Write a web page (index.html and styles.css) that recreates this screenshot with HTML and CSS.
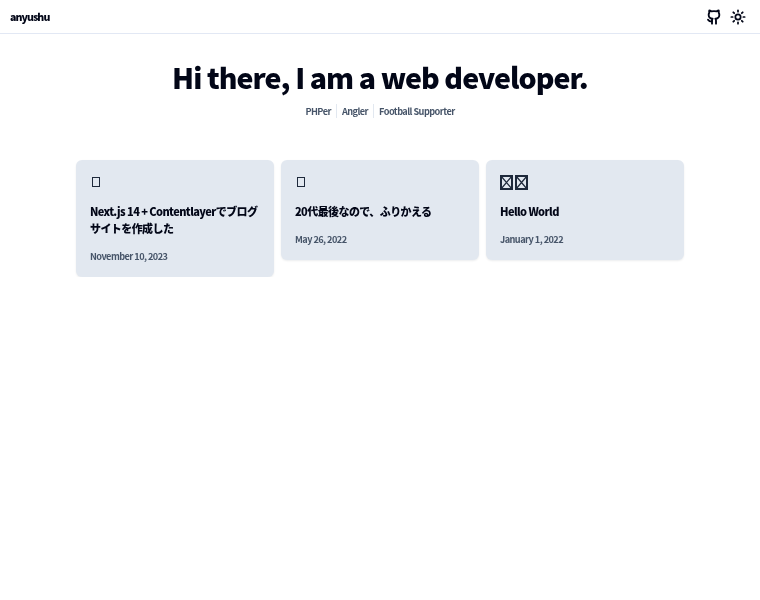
FILE: index.html
```html
<!DOCTYPE html>
<html lang="ja">
<head>
<meta charset="utf-8">
<title>anyushu</title>
<link rel="stylesheet" href="styles.css">
</head>
<body>
<header class="header">
  <a class="logo" href="#">anyushu</a>
  <div class="actions">
    <svg class="icon" viewBox="0 0 24 24" fill="none" stroke="currentColor" stroke-width="2.8" stroke-linecap="round" stroke-linejoin="round"><path d="M15 22v-4a4.8 4.8 0 0 0-1-3.5c3 0 6-2 6-5.5.08-1.25-.27-2.48-1-3.5.28-1.15.28-2.35 0-3.5 0 0-1 0-3 1.5-2.64-.5-5.36-.5-8 0C6 2 5 2 5 2c-.3 1.15-.3 2.35 0 3.5A5.4 5.4 0 0 0 4 9c0 3.5 3 5.5 6 5.5-.39.49-.68 1.05-.85 1.65-.17.6-.22 1.23-.15 1.85v4"/><path d="M9 18c-4.51 2-5-2-6-2"/></svg>
    <svg class="icon" viewBox="0 0 24 24" fill="none" stroke="currentColor" stroke-width="2.6" stroke-linecap="round" stroke-linejoin="round"><circle cx="12" cy="12" r="4"/><path d="M12 2v2M12 20v2M4.93 4.93l1.41 1.41M17.66 17.66l1.41 1.41M2 12h2M20 12h2M6.34 17.66l-1.41 1.41M19.07 4.93l-1.41 1.41"/></svg>
  </div>
</header>
<main class="main">
  <h1 class="title">Hi there, I am a web developer.</h1>
  <ul class="tags">
    <li class="tag">PHPer</li>
    <li class="tag">Angler</li>
    <li class="tag">Football Supporter</li>
  </ul>
  <div class="cards">
    <article class="card">
      <div class="emoji"><span class="tofu"></span></div>
      <h2 class="card-title">Next.js 14 + Contentlayerでブログサイトを作成した</h2>
      <time class="date">November 10, 2023</time>
    </article>
    <article class="card">
      <div class="emoji"><span class="tofu"></span></div>
      <h2 class="card-title">20代最後なので、ふりかえる</h2>
      <time class="date">May 26, 2022</time>
    </article>
    <article class="card">
      <div class="emoji">
        <svg class="xbox" viewBox="0 0 13 15" fill="none" stroke="currentColor"><path stroke-width="2" d="M1 1h11v13H1z"/><path stroke-width="1.2" d="M1 1l11 13M12 1L1 14"/></svg>
        <svg class="xbox" viewBox="0 0 13 15" fill="none" stroke="currentColor"><path stroke-width="2" d="M1 1h11v13H1z"/><path stroke-width="1.2" d="M1 1l11 13M12 1L1 14"/></svg>
      </div>
      <h2 class="card-title">Hello World</h2>
      <time class="date">January 1, 2022</time>
    </article>
  </div>
</main>
</body>
</html>
```
FILE: styles.css
```css
* { box-sizing: border-box; }
body {
  margin: 0;
  background: #fff;
  color: #0f172a;
  font-family: "Noto Sans CJK JP", "Noto Sans", sans-serif;
  filter: blur(0.3px);
}
.header {
  height: 34px;
  display: flex;
  align-items: center;
  justify-content: space-between;
  padding: 0 14px 0 10px;
  border-bottom: 1px solid #e2e8f4;
}
.logo {
  font-size: 10.6px;
  font-weight: 900;
  letter-spacing: -0.95px;
  color: #020617;
  text-decoration: none;
}
.actions { display: flex; gap: 8px; }
.icon { width: 16px; height: 16px; color: #020617; display: block; }
.main {
  width: 608px;
  margin: 0 auto;
  padding-top: 20px;
}
.title {
  margin: 0;
  text-align: center;
  font-size: 28.5px;
  line-height: 46px;
  font-weight: 900;
  letter-spacing: -0.95px;
  color: #020617;
  white-space: nowrap;
}
.tags {
  list-style: none;
  margin: 4px 0 0;
  padding: 0;
  display: flex;
  justify-content: center;
  font-size: 9.2px;
  line-height: 14px;
  font-weight: 700;
  letter-spacing: -0.56px;
  color: #475569;
}
.tag { padding: 0 5px; }
.tag + .tag { border-left: 1px solid #e2e8f0; }
.cards {
  margin-top: 42px;
  display: grid;
  grid-template-columns: repeat(3, 1fr);
  gap: 7px;
  align-items: start;
}
.card {
  background: #e2e8f0;
  border-radius: 6px;
  padding: 14px;
  box-shadow: 0 1px 2px rgba(15,23,42,0.08);
}
.emoji { height: 16px; display: flex; align-items: center; gap: 2px; color: #1e293b; }
.tofu { display: block; width: 8px; height: 10px; margin-left: 2px; border: 1.3px solid #1e293b; }
.xbox { display: block; width: 13px; height: 15px; flex: none; }
.card-title {
  margin: 13px 0 0;
  font-size: 11px;
  line-height: 17px;
  font-weight: 900;
  letter-spacing: -0.58px;
  color: #020617;
}
.date {
  display: block;
  margin-top: 12px;
  font-size: 9.2px;
  line-height: 14px;
  font-weight: 700;
  letter-spacing: -0.56px;
  color: #475569;
}
```
